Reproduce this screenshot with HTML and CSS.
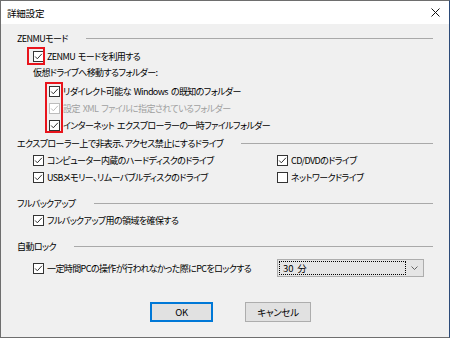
FILE: index.html
```html
<!DOCTYPE html>
<html lang="ja">
<head>
    <meta charset="UTF-8">
    <title>詳細設定</title>
    <link rel="stylesheet" href="styles.css">
</head>
<body>
    <svg width="0" height="0" class="defs">
        <symbol id="box" viewBox="0 0 11 11">
            <rect x="0.5" y="0.5" width="10" height="10" fill="#fff" stroke="currentColor"/>
        </symbol>
        <symbol id="chk" viewBox="0 0 11 11">
            <rect x="0.5" y="0.5" width="10" height="10" fill="#fff" stroke="currentColor"/>
            <polyline points="2.2,5.5 4.3,7.8 8.9,2.8" fill="none" stroke="currentColor" stroke-width="1"/>
        </symbol>
    </svg>

    <div class="dialog">
        <div class="titlebar">
            <span class="title">詳細設定</span>
            <svg class="close" viewBox="0 0 9 9"><path d="M0.5 0.5 L8.5 8.5 M8.5 0.5 L0.5 8.5" stroke="#111" stroke-width="1"/></svg>
        </div>

        <div class="content">
            <div class="group-head"><span>ZENMUモード</span><i class="rule"></i></div>
            <div class="row zenmu">
                <span class="mark mark-zenmu"></span>
                <svg class="cb"><use href="#chk"/></svg>ZENMU モードを利用する
            </div>
            <div class="sublabel">仮想ドライブへ移動するフォルダー:</div>
            <div class="folders">
                <span class="mark mark-folders"></span>
                <div class="row"><svg class="cb"><use href="#chk"/></svg>リダイレクト可能な Windows の既知のフォルダー</div>
                <div class="row disabled"><svg class="cb"><use href="#chk"/></svg>設定 XML ファイルに指定されているフォルダー</div>
                <div class="row"><svg class="cb"><use href="#chk"/></svg>インターネット エクスプローラーの一時ファイルフォルダー</div>
            </div>

            <div class="group-head"><span>エクスプローラー上で非表示、アクセス禁止にするドライブ</span><i class="rule"></i></div>
            <div class="drives">
                <div class="row"><svg class="cb"><use href="#chk"/></svg>コンピューター内蔵のハードディスクのドライブ</div>
                <div class="row"><svg class="cb"><use href="#chk"/></svg>CD/DVDのドライブ</div>
                <div class="row"><svg class="cb"><use href="#chk"/></svg>USBメモリー、リムーバブルディスクのドライブ</div>
                <div class="row"><svg class="cb"><use href="#box"/></svg>ネットワークドライブ</div>
            </div>

            <div class="group-head gap"><span>フルバックアップ</span><i class="rule"></i></div>
            <div class="row indent"><svg class="cb"><use href="#chk"/></svg>フルバックアップ用の領域を確保する</div>

            <div class="group-head gap"><span>自動ロック</span><i class="rule"></i></div>
            <div class="lock">
                <div class="row"><svg class="cb"><use href="#chk"/></svg>一定時間PCの操作が行われなかった際にPCをロックする</div>
                <div class="combo">
                    <span class="combo-value">30 分</span>
                    <svg class="combo-arrow" viewBox="0 0 7 4"><polyline points="0.5,0.5 3.5,3.5 6.5,0.5" fill="none" stroke="#555" stroke-width="0.9"/></svg>
                </div>
            </div>

            <div class="buttons">
                <button class="btn btn-default">OK</button>
                <button class="btn">キャンセル</button>
            </div>
        </div>
    </div>
</body>
</html>
```

FILE: styles.css
```css
body {
    margin: 0;
    padding: 0;
    background-color: #2b4a78;
    font-family: "Noto Sans CJK JP", "Liberation Sans", sans-serif;
    font-size: 9px;
    letter-spacing: -0.6px;
    word-spacing: 1.5px;
    font-feature-settings: "palt";
    color: #000;
}

.defs {
    position: absolute;
}

.dialog {
    width: 448px;
    height: 336px;
    border: 1px solid #6e6e6e;
    border-right-color: #2b4a78;
    background-color: #f0f0f0;
    display: flex;
    flex-direction: column;
}

.titlebar {
    height: 23px;
    background-color: #fff;
    display: flex;
    align-items: center;
    padding: 0 9px 0 6px;
}

.title {
    flex: 1;
    font-size: 9.5px;
    letter-spacing: -0.2px;
}

.close {
    width: 9px;
    height: 9px;
}

.content {
    padding: 6px 16px 0 16px;
}

.group-head {
    height: 16px;
    display: flex;
    align-items: center;
}

.group-head.gap {
    margin-top: 9px;
}

.rule {
    flex: 1;
    height: 1px;
    margin-left: 18px;
    background-color: #a9a9a9;
}

.row {
    height: 17px;
    display: flex;
    align-items: center;
    white-space: nowrap;
}

.cb {
    width: 11px;
    height: 11px;
    margin-right: 3px;
    color: #333;
    flex-shrink: 0;
}

.disabled {
    color: #a0a0a0;
}

.disabled .cb {
    color: #bcbcbc;
}

.zenmu {
    position: relative;
    height: 18px;
    margin-top: 1px;
    padding-left: 16px;
}

.sublabel {
    height: 16px;
    line-height: 16px;
    padding-left: 16px;
}

.folders {
    position: relative;
    margin: 2px 0 1px;
    padding-left: 32px;
}

/* red annotation frames drawn over the checkboxes */
.mark {
    position: absolute;
    border: 2px solid #e8141c;
}

.mark-zenmu {
    left: 10px;
    top: 0;
    width: 14px;
    height: 14px;
}

.mark-folders {
    left: 28px;
    top: -1px;
    width: 14px;
    height: 47px;
}

.drives {
    display: grid;
    grid-template-columns: 244px 1fr;
    margin-top: 1px;
    padding-left: 16px;
}

.indent {
    margin-top: 1px;
    padding-left: 16px;
}

.lock {
    display: grid;
    grid-template-columns: 244px 147px;
    align-items: center;
    height: 20px;
    margin-top: 4px;
    padding-left: 16px;
}

.combo {
    height: 16px;
    border: 1px solid #adadad;
    background-color: #e5e5e5;
    display: flex;
    align-items: center;
}

.combo-value {
    flex: 1;
    height: 12px;
    line-height: 12px;
    margin-left: 1px;
    padding-left: 3px;
    border: 1px dotted #000;
    font-size: 9.5px;
    letter-spacing: 0;
}

.combo-arrow {
    width: 7px;
    height: 4px;
    margin: 0 5px 0 5px;
}

.buttons {
    display: flex;
    gap: 32px;
    margin-top: 24px;
    padding-left: 133px;
}

.btn {
    height: 20px;
    width: 64px;
    padding: 0;
    border: 1px solid #adadad;
    background-color: #e1e1e1;
    font-family: inherit;
    font-size: 9.5px;
    letter-spacing: -0.3px;
    font-feature-settings: "palt";
    color: #000;
}

.btn-default {
    width: 63px;
    border: 2px solid #0078d7;
}

.btn + .btn {
    width: 66px;
}
```
